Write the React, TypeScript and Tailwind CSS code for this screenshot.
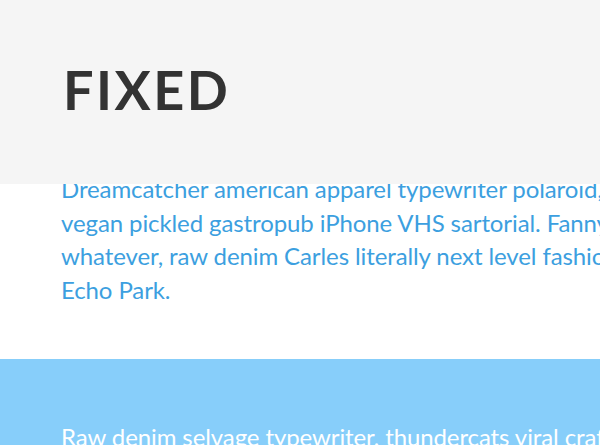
import React from "react";

export default function App() {
  return (
    <div
      className="relative w-[600px] h-[445px] overflow-hidden bg-white"
      style={{ fontFamily: "Lato, 'Open Sans', sans-serif" }}
    >
      <header className="absolute top-0 left-0 right-0 h-[184px] bg-[#f5f5f5] z-10 px-[63px] pt-[63px]">
        <h1 className="text-[54px] leading-[54px] font-bold tracking-[2.5px] text-[#333333]">
          FIXED
        </h1>
      </header>

      <main className="flex flex-col">
        <section className="pt-[172px] pb-[53px] px-[61px]">
          <p className="text-[24px] leading-[33.6px] tracking-[-0.1px] text-[#3c9fe0] whitespace-nowrap">
            Dreamcatcher american apparel typewriter polaroid, tofu
            <br />
            vegan pickled gastropub iPhone VHS sartorial. Fanny pack
            <br />
            whatever, raw denim Carles literally next level fashion axe
            <br />
            Echo Park.
          </p>
        </section>
        <section className="bg-[#87cefa] pt-[61px] pb-[60px] px-[61px]">
          <p className="text-[24px] leading-[33.6px] tracking-[-0.1px] text-white whitespace-nowrap">
            Raw denim selvage typewriter, thundercats viral craft beer
            <br />
            keffiyeh trust fund Williamsburg.
          </p>
        </section>
      </main>
    </div>
  );
}
